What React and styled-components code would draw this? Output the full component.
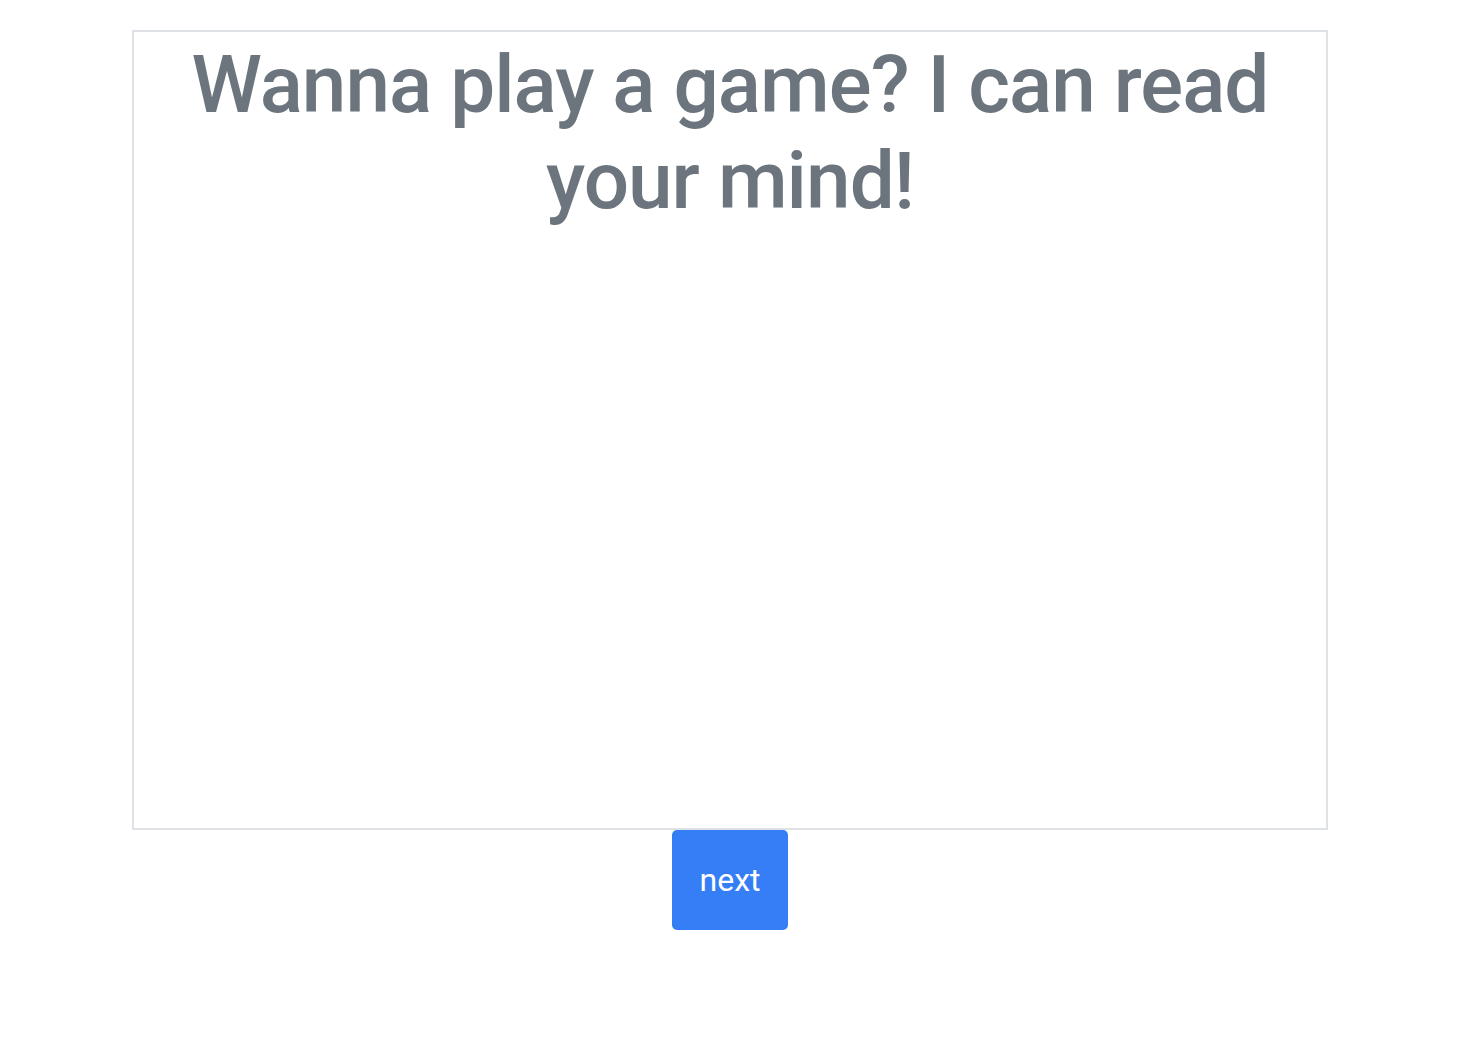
import React from "react";
import styled, { createGlobalStyle } from "styled-components";

const GlobalStyle = createGlobalStyle`
  body {
    margin: 0;
    background: #fff;
    font-family: Roboto, "Liberation Sans", Arial, sans-serif;
  }
`;

const Page = styled.div`
  padding: 30px 0 0 132px;
`;

const Column = styled.div`
  width: 1196px;
  display: flex;
  flex-direction: column;
  align-items: center;
`;

const Board = styled.div`
  box-sizing: border-box;
  width: 100%;
  height: 800px;
  border: 2px solid #dee2e6;
  text-align: center;
`;

const Title = styled.h1`
  margin: 0;
  padding: 5px 20px 0;
  font-size: 80px;
  line-height: 96px;
  font-weight: 500;
  letter-spacing: -0.95px;
  color: #6c757d;
`;

const NextButton = styled.button`
  box-sizing: border-box;
  width: 116px;
  height: 100px;
  border: none;
  border-radius: 5px;
  background: #367ef6;
  color: #fff;
  font-family: Roboto, "Liberation Sans", Arial, sans-serif;
  font-size: 32px;
  cursor: pointer;
`;

export default function App() {
  return (
    <>
      <GlobalStyle />
      <Page>
        <Column>
          <Board>
            <Title>Wanna play a game? I can read your mind!</Title>
          </Board>
          <NextButton>next</NextButton>
        </Column>
      </Page>
    </>
  );
}
